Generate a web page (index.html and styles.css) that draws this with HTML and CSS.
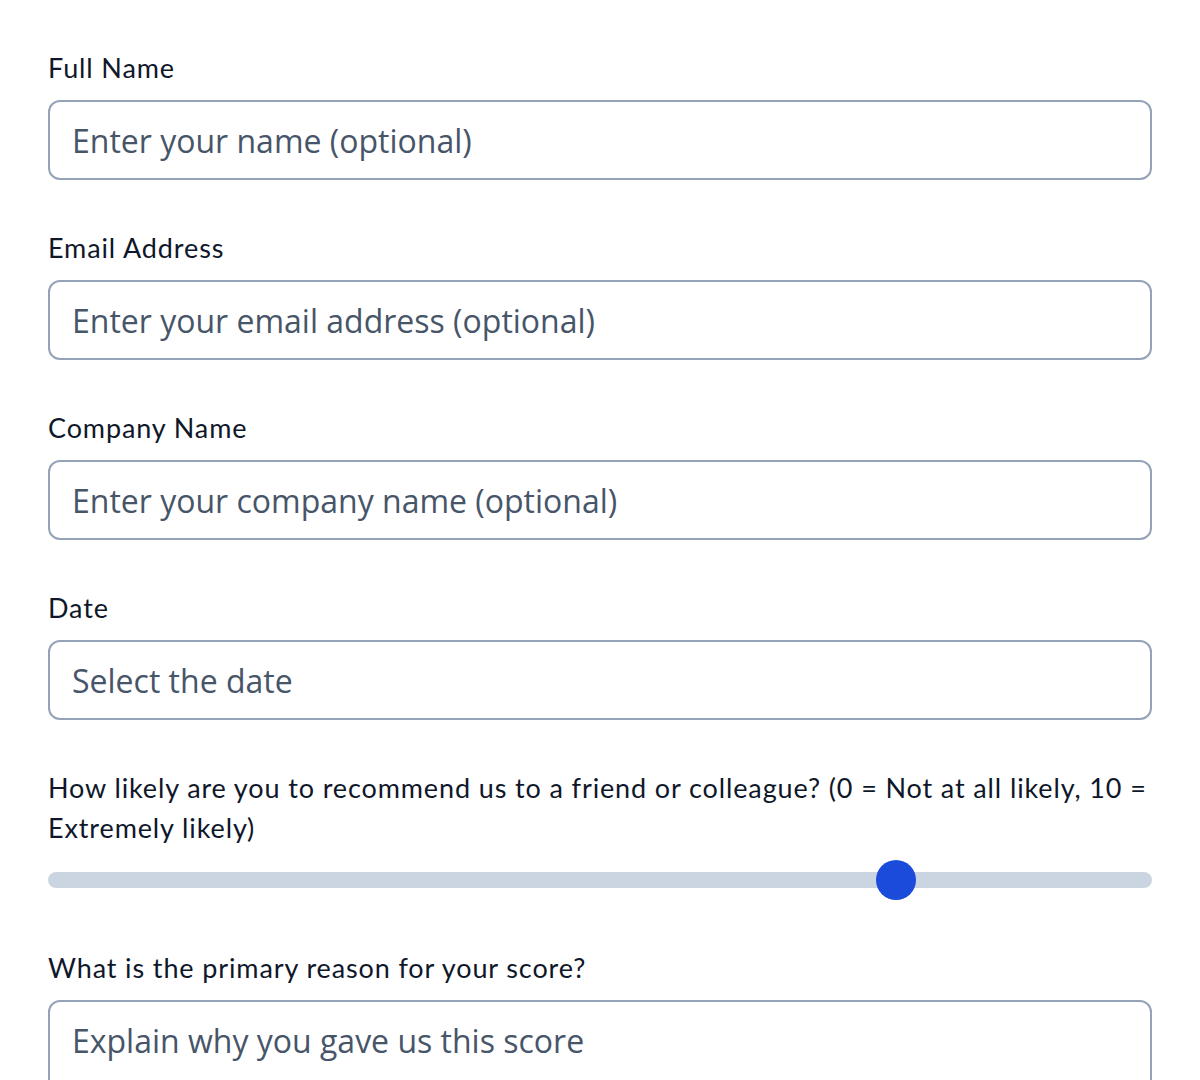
FILE: index.html
```html
<!DOCTYPE html>
<html lang="en">
<head>
<meta charset="utf-8">
<title>Survey</title>
<link rel="stylesheet" href="styles.css">
</head>
<body>
<form class="form">
  <div class="field">
    <label class="label" for="name">Full Name</label>
    <input class="input" id="name" type="text" placeholder="Enter your name (optional)">
  </div>
  <div class="field">
    <label class="label" for="email">Email Address</label>
    <input class="input" id="email" type="email" placeholder="Enter your email address (optional)">
  </div>
  <div class="field">
    <label class="label" for="company">Company Name</label>
    <input class="input" id="company" type="text" placeholder="Enter your company name (optional)">
  </div>
  <div class="field">
    <label class="label" for="date">Date</label>
    <input class="input" id="date" type="text" placeholder="Select the date">
  </div>
  <div class="field">
    <label class="label" for="score">How likely are you to recommend us to a friend or colleague? (0 = Not at all likely, 10 = Extremely likely)</label>
    <input class="range" id="score" type="range" min="0" max="10" step="0.01" value="7.78">
  </div>
  <div class="field">
    <label class="label" for="reason">What is the primary reason for your score?</label>
    <textarea class="input textarea" id="reason" placeholder="Explain why you gave us this score"></textarea>
  </div>
</form>
</body>
</html>
```

FILE: styles.css
```css
html, body {
  margin: 0;
  padding: 0;
  background: #ffffff;
}

.form {
  display: flex;
  flex-direction: column;
  gap: 48px;
  padding: 48px 48px 0 48px;
}

.field {
  display: flex;
  flex-direction: column;
  gap: 12px;
}

.label {
  font-family: "Lato", "Noto Sans", sans-serif;
  font-size: 27px;
  line-height: 40px;
  color: #0f172a;
  letter-spacing: 0.88px;
}

.input {
  box-sizing: border-box;
  width: 100%;
  height: 80px;
  margin: 0;
  padding: 0 22px;
  border: 2px solid #94a3b8;
  border-radius: 12px;
  background: #ffffff;
  font-family: "Open Sans", "Noto Sans", sans-serif;
  font-size: 32px;
  color: #0f172a;
  outline: none;
}

.input::placeholder {
  color: #475569;
  opacity: 1;
}

.textarea {
  height: 160px;
  padding-top: 17px;
  line-height: 44px;
  resize: none;
  display: block;
}

.range {
  -webkit-appearance: none;
  appearance: none;
  width: 100%;
  height: 40px;
  margin: 0;
  background: transparent;
}

.range::-webkit-slider-runnable-track {
  height: 16px;
  border-radius: 8px;
  background: #cbd5e1;
}

.range::-webkit-slider-thumb {
  -webkit-appearance: none;
  appearance: none;
  width: 40px;
  height: 40px;
  margin-top: -12px;
  border-radius: 50%;
  background: #1a4bdb;
  border: none;
}

.range::-moz-range-track {
  height: 16px;
  border-radius: 8px;
  background: #cbd5e1;
}

.range::-moz-range-thumb {
  width: 40px;
  height: 40px;
  border-radius: 50%;
  background: #1a4bdb;
  border: none;
}
```
